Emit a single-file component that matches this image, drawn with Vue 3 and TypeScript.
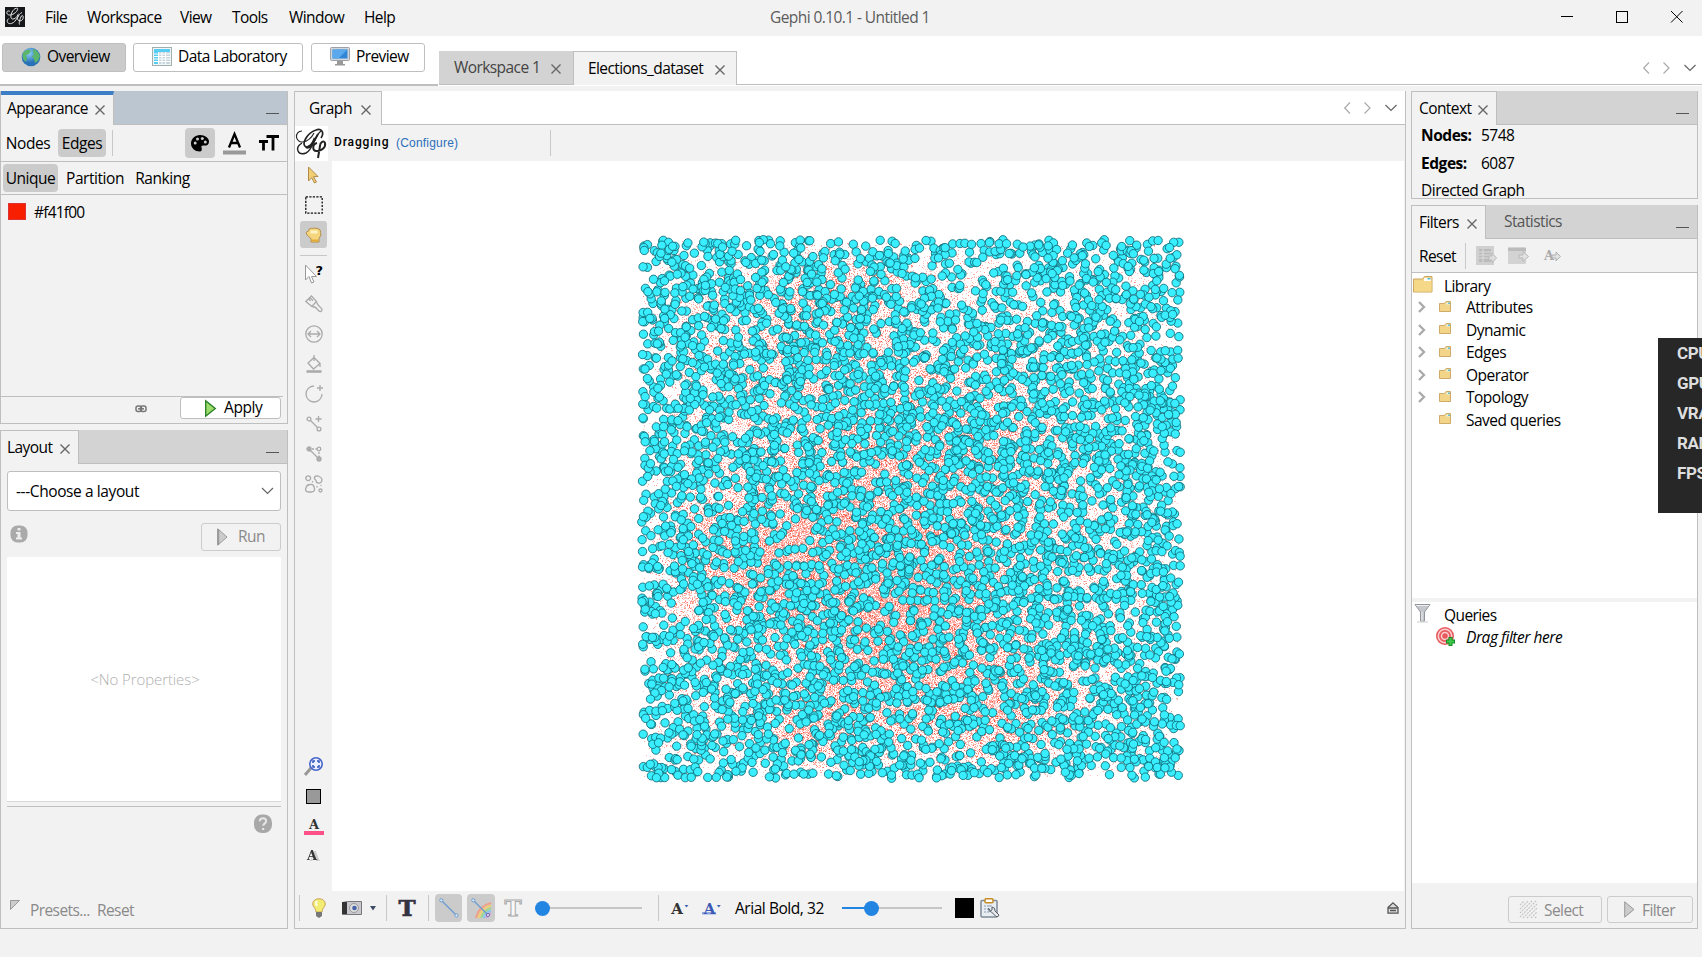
<script setup lang="ts">
import { onMounted, ref } from 'vue'

const menus = ['File', 'Workspace', 'View', 'Tools', 'Window', 'Help']
const library = ['Attributes', 'Dynamic', 'Edges', 'Operator', 'Topology', 'Saved queries']
const meters = ['CPU', 'GPU', 'VRAM', 'RAM', 'FPS']

const nodeCount = 5748
const size = 548
const canvas = ref<HTMLCanvasElement | null>(null)

let seed = 90210
function rnd(): number {
  seed = (seed + 0x6d2b79f5) | 0
  let t = Math.imul(seed ^ (seed >>> 15), 1 | seed)
  t = (t + Math.imul(t ^ (t >>> 7), 61 | t)) ^ t
  return ((t ^ (t >>> 14)) >>> 0) / 4294967296
}

interface Hub { x: number; y: number; r: number; w: number }
const hubs: Hub[] = [
  { x: 245, y: 340, r: 150, w: 0.36 },
  { x: 275, y: 400, r: 65, w: 0.35 },
  { x: 140, y: 330, r: 50, w: 0.32 },
  { x: 265, y: 240, r: 75, w: 0.22 },
  { x: 205, y: 35, r: 42, w: 0.35 },
  { x: 180, y: 510, r: 36, w: 0.35 },
  { x: 370, y: 495, r: 50, w: 0.3 },
  { x: 140, y: 100, r: 60, w: 0.22 },
  { x: 60, y: 315, r: 35, w: 0.2 },
  { x: 370, y: 200, r: 60, w: 0.15 },
]

onMounted(() => {
  const ctx = canvas.value?.getContext('2d')
  if (!ctx) return
  const img = ctx.createImageData(size, size)
  for (let y = 6; y < size - 6; y++) {
    for (let x = 6; x < size - 6; x++) {
      const border = Math.min(x, y, size - x, size - y)
      let p = 0.08
      for (const h of hubs) {
        const d = ((x - h.x) ** 2 + (y - h.y) ** 2) / (2 * h.r * h.r)
        p += h.w * Math.exp(-d)
      }
      p *= Math.min(1, border / 50)
      if (rnd() < p) {
        const i = (y * size + x) * 4
        img.data[i] = 246
        img.data[i + 1] = 45
        img.data[i + 2] = 20
        img.data[i + 3] = 60 + Math.floor(rnd() * rnd() * (90 + 230 * Math.min(p, 0.45)))
      }
    }
  }
  ctx.putImageData(img, 0, 0)
  ctx.lineWidth = 1
  ctx.strokeStyle = 'rgba(16, 105, 115, 0.85)'
  ctx.fillStyle = '#38eeff'
  for (let i = 0; i < nodeCount; i++) {
    ctx.beginPath()
    ctx.arc(4.7 + rnd() * (size - 9.4), 4.7 + rnd() * (size - 9.4), 4.2, 0, Math.PI * 2)
    ctx.fill()
    ctx.stroke()
  }
})
</script>

<template>
  <div class="app">
    <header class="title">
      <svg class="logo" width="20" height="20" viewBox="0 0 33 33"><rect width="33" height="33" fill="#15171a" /><g fill="none" stroke="#e8e8e8" stroke-width="1.6"><path d="M8 7C1 4 1 15 10 13c9-2 14-12 9-11C11 3 6 20 13 20c6 0 9-9 9-9M6 19c-5 5-1 10 5 8 8-2 10-15 17-18M24 29c-2-2 2-14 4-15 4 0 2 9-3 9s-6-6-2-9" /></g></svg>
      <nav><span v-for="m in menus" :key="m" :class="'m-' + m.toLowerCase()">{{ m }}</span></nav>
      <span class="caption">Gephi 0.10.1 - Untitled 1</span>
      <svg class="winbtns" width="122" height="20" viewBox="0 0 122 20" fill="none" stroke="#000"><path d="M0 9.5h12" /><rect x="55.5" y="4.5" width="11" height="11" /><path d="M110 4l11.500 11.500M121.500 4L110 15.500" /></svg>
    </header>

    <div class="perspective">
      <div class="modes">
        <button class="mode on"><svg width="20" height="20" viewBox="0 0 20 20"><defs><radialGradient id="gl" cx=".4" cy=".3"><stop offset="0" stop-color="#8fd0f8" /><stop offset="1" stop-color="#2a72b8" /></radialGradient></defs><circle cx="10" cy="10" r="9.300" fill="url(#gl)" /><path d="M2 6c3-4 6-4 8-2l-2 3-3 1 1 3-1 4C2 13 1 9 2 6zM12 2c4 1 6 4 7 7l-2 5-3 2-1-4-2-2 2-3-1-2z" fill="#5bb56a" /></svg><span>Overview</span></button>
        <button class="mode lab"><svg width="20" height="19" viewBox="0 0 20 19"><rect x=".5" y=".5" width="19" height="18" fill="#f4f6f6" stroke="#9fb0b0" /><rect x="2" y="2" width="16" height="15" fill="#c5d6de" /><path d="M2 2h16v3H2zM2 5h4v12H2z" fill="#55ccf4" /><path d="M2 7h16M2 9.500h16M2 12h16M2 14.500h16M6.500 5v12M10 5v12M13.500 5v12" stroke="#fff" /></svg><span>Data Laboratory</span></button>
        <button class="mode prev"><svg width="20" height="19" viewBox="0 0 20 19"><rect x=".5" y=".5" width="19" height="13" rx="1" fill="#d3d6da" stroke="#9da2a8" /><path d="M2.500 2.500h15v9h-15z" fill="#2f86d6" /><path d="M2.500 2.500h15l-9 9h-6z" fill="#59a9ec" /><path d="M7 14h6v3h2v1.500H5V17h2z" fill="#999" /></svg><span>Preview</span></button>
      </div>
      <div class="wtabs">
        <div class="wtab w1"><span>Workspace 1</span><svg class="x" width="10" height="10" viewBox="0 0 10 10"><path d="M.5.5l9 9M9.500.5l-9 9" /></svg></div>
        <div class="wtab w2"><span>Elections_dataset</span><svg class="x" width="10" height="10" viewBox="0 0 10 10"><path d="M.5.5l9 9M9.500.5l-9 9" /></svg></div>
        <svg class="nav" width="53" height="12" viewBox="0 0 53 12"><path d="M6 .5L.7 6 6 11.500M20.500.5L26 6l-5.500 5.500" stroke="#aaa" /><path d="M41.500 3L47 8.500 52.500 3" stroke="#666" /></svg>
      </div>
    </div>

    <main class="work">
      <div class="col left">
        <section class="panel appearance">
          <div class="head active"><div class="tab"><span>Appearance</span><svg class="x" width="10" height="10" viewBox="0 0 10 10"><path d="M.5.5l9 9M9.500.5l-9 9" /></svg></div><i class="min"></i></div>
          <div class="row kinds">
            <span class="seg">Nodes</span><span class="seg on">Edges</span><i class="vsep"></i>
            <div class="chooser">
              <span class="ibtn on"><svg width="18" height="17" viewBox="0 0 18 17"><path d="M9 0c5 0 9 3 9 6.500C18 10 15 11 13 10.500c-2-.4-3 .5-2.500 2 .8 2 .3 4-1.800 4C4 16.500 0 13 0 8.500S4 0 9 0z" /><g fill="#ccc"><circle cx="4.200" cy="8" r="1.500" /><circle cx="6.500" cy="4" r="1.500" /><circle cx="11.300" cy="3.600" r="1.500" /><circle cx="14.300" cy="7" r="1.500" /></g></svg></span>
              <svg width="23" height="23" viewBox="0 0 23 23"><path d="M6 15.500L11.500 2 17 15.500M7.500 11h8" fill="none" stroke="#000" stroke-width="2.300" /><path d="M0 18.500h23v4H0z" fill="#999" /></svg>
              <svg class="tt" width="20" height="16" viewBox="0 0 20 16"><path d="M7.500 1.500H20M14 1v14.500M0 6.500h9M4.500 6v9.500" stroke="#000" stroke-width="2.800" /></svg>
            </div>
          </div>
          <div class="row modesrow"><span class="seg on">Unique</span><span class="seg">Partition</span><span class="seg">Ranking</span></div>
          <div class="colour"><i></i>#f41f00</div>
          <div class="apply-row">
            <svg width="12" height="8" viewBox="0 0 12 8" fill="none" stroke="#777" stroke-width="1.500"><rect x="1" y="1" width="5.500" height="5.500" rx="2" /><rect x="5.500" y="1" width="5.500" height="5.500" rx="2" /><path d="M3 3.800h6" /></svg>
            <button class="btn"><svg width="11" height="17" viewBox="0 0 11 17"><path d="M.7.8l9.600 7.700L.7 16.200z" fill="#9bdc6c" stroke="#257c22" stroke-width="1.300" /></svg><span>Apply</span></button>
          </div>
        </section>
        <section class="panel layout">
          <div class="head"><div class="tab"><span>Layout</span><svg class="x" width="10" height="10" viewBox="0 0 10 10"><path d="M.5.5l9 9M9.500.5l-9 9" /></svg></div><i class="min"></i></div>
          <div class="combo">---Choose a layout<svg width="13" height="8" viewBox="0 0 13 8"><path d="M1 1l5.500 5.500L12 1" fill="none" stroke="#666" stroke-width="1.200" /></svg></div>
          <div class="runrow"><svg width="18" height="18" viewBox="0 0 18 18"><rect x=".5" y=".5" width="17" height="17" rx="7" fill="#aaa" /><path d="M7.500 3h3v2.500h-3zM6 7h4.500v5.500H12v2H6v-2h1.500V9H6z" fill="#eee" /></svg>
            <button class="btn off"><svg width="11" height="18" viewBox="0 0 11 18"><path d="M.7.8l9.300 8.200L.7 17.200z" fill="#ccc" stroke="#999" /><path d="M1.200 1v16" stroke="#999" stroke-width="2" /></svg><span>Run</span></button></div>
          <div class="props">&lt;No Properties&gt;</div>
          <div class="desc"><svg width="18" height="20" viewBox="0 0 18 20"><rect y=".5" width="18" height="18.500" rx="8" fill="#a8a8a8" /><path d="M5.800 7.300c0-4 6.400-4 6.400 0 0 2-3 2.200-3 4.500M8 15h2.200" fill="none" stroke="#e5e5e5" stroke-width="2" /></svg></div>
          <div class="presets"><svg width="11" height="11" viewBox="0 0 11 11"><path d="M.5.5h9l-9 9z" fill="#ccc" stroke="#999" /></svg><span>Presets...</span><span class="rs">Reset</span></div>
        </section>
      </div>

      <section class="panel graph">
        <div class="head white"><div class="tab"><span>Graph</span><svg class="x" width="10" height="10" viewBox="0 0 10 10"><path d="M.5.5l9 9M9.500.5l-9 9" /></svg></div>
          <svg class="nav" width="53" height="12" viewBox="0 0 53 12"><path d="M6 .5L.7 6 6 11.500M20.500.5L26 6l-5.500 5.500" stroke="#aaa" /><path d="M41.500 3L47 8.500 52.500 3" stroke="#666" /></svg></div>
        <div class="status">
          <svg class="script" width="33" height="35" viewBox="0 0 33 35"><rect width="33" height="35" fill="#fff" /><g fill="none" stroke="#222"><path d="M7 5C-1 5 0 17 8 16c5-1 9-5 11-9" stroke-width="1.100" /><path d="M26 12c4-6 0-10-5-8C12 7 6 18 11 21c5 1 9-7 12-13" stroke-width="1.700" /><path d="M7 17c-8 5-4 13 4 10C18 24 19 10 26 5" stroke-width="1.400" /><path d="M22 17c-5 1-5 9 0 8 5 0 9-4 8-8-1-3-5-1-5 3l-2 12" stroke-width="2" /><path d="M11 21c4 2 7-4 9-9" stroke-width="2.500" /></g></svg>
          <b>Dragging</b><a>(Configure)</a><i class="vsep"></i>
        </div>
        <div class="stage">
          <div class="tools">
            <span><svg width="14" height="18" viewBox="0 0 14 18"><path d="M1.500 1l9.500 9.500-4.500.2 3 5.300-2 1-2.800-5.300-3.200 3.300z" fill="#f2cf72" stroke="#b08a4a" /></svg></span>
            <span><svg width="18" height="18" viewBox="0 0 18 18"><rect x=".8" y=".8" width="16.400" height="16.400" fill="none" stroke="#111" stroke-width="1.300" stroke-dasharray="2.200 1.300" /></svg></span>
            <span class="hand"><svg width="17" height="16" viewBox="0 0 17 16"><path d="M4 3.500Q3.500 1.500 5.500 1.500 6 .8 7.500 1.500 9 .3 10.500 1.500 12.500.5 13 2q2.500-.3 2.500 3.500L16 8l-2 3.500V15H6v-3.500L2.500 8.500 1 5.500z" fill="#f6d67c" stroke="#ab8546" stroke-width=".9" /><path d="M5.500 5h7" stroke="#fff4c4" stroke-width="3" /><path d="M6.500 13.500H13" stroke="#e5ac35" stroke-width="2" /></svg></span>
            <hr />
            <span><svg width="20" height="20" viewBox="0 0 20 20"><path d="M1.500 1v15L5 12.500 7.500 19l2.500-1-2.500-5.500h5z" fill="#fff" stroke="#999" /><text x="11.500" y="11" class="q">?</text></svg></span>
            <span><svg class="g" viewBox="0 0 18 18"><path d="M.8 6.500L6.500 1l5 5.500q.5 3 3.500 5.500c2 1.500 2.500 3 1.500 4s-2.500.5-4-1.500q-2-3-5.500-3zM3.500 4l2 2M5 2.800l3 3M7 11.200L11 7" /></svg></span>
            <span><svg class="g" viewBox="0 0 18 18"><circle cx="9" cy="9" r="8.200" /><path d="M3 9h12M6 6L3 9l3 3M12 6l3 3-3 3" /></svg></span>
            <span><svg class="g" viewBox="0 0 18 18"><path d="M9 2.500l6 6-6.500 5.500-5.500-6zM9 0v6M15 8v4" /><path d="M1.500 16.500h15" stroke-width="2.600" /></svg></span>
            <span><svg class="g" viewBox="0 0 18 18"><path d="M9 1a8 8 0 1 0 8 8M15 0v6M12 3h6" /></svg></span>
            <span><svg class="g" viewBox="0 0 18 18"><circle cx="4" cy="4" r="1.900" /><circle cx="14" cy="14" r="1.900" /><path d="M5.500 5.500l7 7M13.500 1v6M10.500 4h6" /></svg></span>
            <span><svg class="g" viewBox="0 0 18 18"><circle cx="4" cy="4" r="2" fill="#b0b0b0" /><circle cx="14" cy="14" r="2" fill="#b0b0b0" /><circle cx="14" cy="4" r="1.800" /><path d="M4 4l10 10" /><path d="M7 4h5M14 7v5" stroke-dasharray="2 1.500" /></svg></span>
            <span><svg class="g" viewBox="0 0 18 18"><circle cx="3.200" cy="3.200" r="2.400" /><path d="M10 1.500q1-1 3-.5 4 1.500 4 4-.5 3.500-4 3-2-.5-2-2.500-2.500-2-1-4zM5 9.500q3.500-.5 4 2.500 2 4.500-2.500 5H3Q-.5 16 1 12.500 2 9.500 5 9.500z" /><circle cx="15.500" cy="15.500" r="1.500" /><path d="M7.500 6v1.500M12 11v1.500M16 10v1" /></svg></span>
            <div class="fill"></div>
            <span><svg width="19" height="19" viewBox="0 0 19 19"><path d="M1 18l6-7" stroke="#999" stroke-width="3" /><circle cx="12" cy="7" r="6.200" fill="#eaf0ff" stroke="#4a67c8" stroke-width="1.600" /><path d="M9 6V4h2M13 4h2v2M15 8v2h-2M11 10H9V8" fill="none" stroke="#3453b8" stroke-width="1.500" /></svg></span>
            <span><i class="swatch"></i></span>
            <span><svg width="20" height="18" viewBox="0 0 20 18"><text x="10" y="12" class="slab">A</text><path d="M0 14h20v4H0z" fill="#ff5187" /></svg></span>
            <span><svg width="16" height="16" viewBox="0 0 16 16"><text x="6" y="12" class="slab shade">A</text></svg></span>
          </div>
          <div class="view"><canvas ref="canvas" :width="size" :height="size"></canvas></div>
        </div>
        <div class="bottom">
          <i class="vsep"></i>
          <svg class="bulb" width="14" height="20" viewBox="0 0 14 20"><path d="M4 14C4 10 .7 9 .7 6c0-7 12.600-7 12.600 0 0 3-3.300 4-3.300 8z" fill="#f3ec72" stroke="#c9a45c" /><path d="M5 3q-2 2 0 5" fill="none" stroke="#fffde0" stroke-width="2" /><path d="M4 14h6v4l-3 2-3-2z" fill="#777" /></svg>
          <svg class="cam" width="20" height="16" viewBox="0 0 20 16"><path d="M.5 2.500l5-1h14v13H.5z" fill="#c8c8ce" stroke="#777" /><path d="M0 2h5v12H0z" fill="#333" /><circle cx="12" cy="8" r="4.500" fill="#ddd" stroke="#999" /><circle cx="12.500" cy="8" r="2.300" fill="#4762a8" /></svg>
          <svg class="dd" width="6" height="5" viewBox="0 0 6 5"><path d="M0 0h6L3 4.500z" fill="#3d4b66" /></svg>
          <i class="vsep"></i>
          <svg class="t1" width="20" height="26" viewBox="0 0 20 26"><text x="10" y="21" class="bigt">T</text></svg>
          <i class="vsep"></i>
          <span class="ibtn on b1"><svg width="20" height="20" viewBox="0 0 20 20"><path d="M2 2l16 16" stroke="#6f9dd0" stroke-width="1.500" /><circle cx="2.300" cy="2.300" r="1.600" fill="#dcebfa" stroke="#6f9dd0" /><circle cx="17.500" cy="17.500" r="1.600" fill="#dcebfa" stroke="#6f9dd0" /></svg></span>
          <span class="ibtn on b2"><svg width="20" height="20" viewBox="0 0 20 20" fill="none"><g stroke-width="2.200"><path d="M5 20Q8 8 20 5" stroke="#efa08d" /><path d="M7.500 20Q10 10 20 7.500" stroke="#f1ce74" /><path d="M10 20q2-7 10-10" stroke="#a5d68d" /><path d="M12.500 20q1-5 7.500-7.500" stroke="#8bc7e8" /><path d="M15 20q1-3 5-5" stroke="#c6a4dd" /></g><path d="M2 2l16 16" stroke="#6f9dd0" stroke-width="1.500" /><circle cx="2.300" cy="2.300" r="1.600" fill="#dcebfa" stroke="#6f9dd0" /><circle cx="17" cy="17" r="1.600" fill="#ddd" stroke="#8065b8" /></svg></span>
          <svg class="t2" width="20" height="26" viewBox="0 0 20 26"><text x="10" y="21" class="bigt hollow">T</text></svg>
          <div class="slider s1"><i></i></div>
          <i class="vsep"></i>
          <svg class="a1" width="18" height="16" viewBox="0 0 18 16"><text x="6" y="14" class="slab mid">A</text><path d="M13.500 5h4l-2 2.500z" fill="#3f64b5" /></svg>
          <svg class="a2" width="19" height="16" viewBox="0 0 19 16"><path d="M0 12h14v2.500H0z" fill="#92a9e0" /><text x="7.500" y="14" class="slab mid blue">A</text><path d="M14.800 5h4l-2 2.500z" fill="#3f64b5" /></svg>
          <span class="font">Arial Bold, 32</span>
          <div class="slider s2"><b></b><i></i></div>
          <i class="black"></i>
          <svg class="clip" width="20" height="20" viewBox="0 0 20 20"><rect x="1" y="2.500" width="16" height="16.500" rx="1" fill="#e8edf2" stroke="#7f8b98" stroke-width="1.500" /><rect x="5" y=".8" width="8" height="4" rx="1" fill="#fff" stroke="#c68b22" stroke-width="1.500" /><path d="M4 8h2M7 8h5M4 11h2M7 11h3M4 14h2M7 14h2" stroke="#8899b5" /><path d="M8.500 10.500q0 3.500 3 3.500l4.500 4.500q2.500 1 3-1.500L15 13q.5-3.500-3-4v3l-1.500.5z" fill="#e8e8ea" stroke="#555d68" /></svg>
          <svg class="up" width="12" height="12" viewBox="0 0 12 12"><path d="M1 5.500L6 .8l5 4.700v5.700H1z" fill="#ddd" stroke="#555" stroke-width="1.300" /><path d="M1 6h10M3 8.500h6" stroke="#555" stroke-width="1.300" /></svg>
        </div>
      </section>

      <div class="col right">
        <section class="panel context">
          <div class="head"><div class="tab"><span>Context</span><svg class="x" width="10" height="10" viewBox="0 0 10 10"><path d="M.5.5l9 9M9.500.5l-9 9" /></svg></div><i class="min"></i></div>
          <div class="stats"><p><b>Nodes:</b>5748</p><p><b>Edges:</b>6087</p><p>Directed Graph</p></div>
        </section>
        <section class="panel filters">
          <div class="head"><div class="tab"><span>Filters</span><svg class="x" width="10" height="10" viewBox="0 0 10 10"><path d="M.5.5l9 9M9.500.5l-9 9" /></svg></div><span class="tab2">Statistics</span><i class="min"></i></div>
          <div class="ftool"><span>Reset</span><i class="vsep"></i>
            <svg class="f1" width="21" height="20" viewBox="0 0 21 20"><rect width="18" height="19" fill="#d0d0d0" /><path d="M3 3h12v13H3z" fill="#bbb" /><path d="M3 6h12M3 9h12M3 12h12M7 3v13" stroke="#ddd" /><path d="M13 10h3V7l4.500 5-4.500 5v-3h-3z" fill="#ddd" stroke="#bbb" /></svg>
            <svg class="f2" width="21" height="18" viewBox="0 0 21 18"><rect width="18" height="17" rx="1" fill="#d3d3d3" /><path d="M0 1h18v3H0z" fill="#bbb" /><path d="M11 8h4V4.500l5.500 5L15 14.500V11h-4z" fill="#e2e2e2" stroke="#b8b8b8" /></svg>
            <svg class="f3" width="18" height="14" viewBox="0 0 18 14"><text x="5" y="11" class="slab grey">A</text><path d="M8 6h4V3l4.500 4.500L12 12V9H8z" fill="#e2e2e2" stroke="#b0b0b0" /></svg>
          </div>
          <div class="tree">
            <div class="root"><svg width="20" height="17" viewBox="0 0 20 17"><path d="M.5 3h9l2-2.500h7.500v15.500H.5z" fill="#f2d589" stroke="#cca65e" /><path d="M11 2h7v3h-7z" fill="#fff" /><path d="M14.500 2h3v1.500h-3z" fill="#56b8d8" /><path d="M1 5h17.500v10.500H1z" fill="#f5d988" /></svg>Library</div>
            <div v-for="(n, i) in library" :key="n" class="leaf">
              <svg class="chev" width="8" height="12" viewBox="0 0 8 12"><path v-if="i < 5" d="M1 1l5 5-5 5" fill="none" stroke="#aaa" stroke-width="2.300" /></svg>
              <svg class="fold" width="12" height="11" viewBox="0 0 12 11"><path d="M.5 2.500h5L7 .5h4.500v10H.5z" fill="#f2d589" stroke="#d0aa68" /><path d="M7.500 1.500H11v2H7.500z" fill="#e3f4ec" /><path d="M9 1.500h2V3H9z" fill="#63bdcd" /></svg>
              {{ n }}
            </div>
          </div>
          <div class="queries">
            <div class="root"><svg width="17" height="20" viewBox="0 0 17 20"><path d="M1 1.500h15L10.500 9v9h-4V9z" fill="#c5c7cd" stroke="#92959c" /><path d="M2 2.500h13" stroke="#eee" /><path d="M8 9v9" stroke="#eee" /><path d="M3 19h11" stroke="#ccc" /></svg>Queries</div>
            <div class="drag"><svg width="20" height="20" viewBox="0 0 20 20"><circle cx="9" cy="9" r="9" fill="#e8595d" /><circle cx="9" cy="9" r="6.700" fill="none" stroke="#fbd0d0" stroke-width="1.500" /><circle cx="9" cy="9" r="3.500" fill="none" stroke="#fbd0d0" stroke-width="1.500" /><path d="M14.500 10v9M10 14.500h9" stroke="#178a25" stroke-width="4" /><path d="M14.500 11v7M11 14.500h7" stroke="#3dc94a" stroke-width="2.200" /></svg>Drag filter here</div>
          </div>
          <div class="fbtns">
            <button class="btn off sel"><svg width="17" height="17" viewBox="0 0 17 17"><path d="M0 4l4-4M0 8l8-8M0 12L12 0M0 16L16 0M3 17L17 3M7 17L17 7M11 17l6-6M15 17l2-2" stroke="#c5c5c5" stroke-width="1.200" stroke-dasharray="2 1" /></svg><span>Select</span></button>
            <button class="btn off fil"><svg width="11" height="17" viewBox="0 0 11 17"><path d="M.7.8l9.300 7.700L.7 16.200z" fill="#ccc" stroke="#999" /></svg><span>Filter</span></button>
          </div>
        </section>
      </div>
    </main>
    <aside class="overlay"><span v-for="m in meters" :key="m">{{ m }}</span></aside>
  </div>
</template>

<style>
html, body { margin: 0; overflow: hidden; background: #f2f2f2; }
</style>

<style scoped>
* { box-sizing: border-box; }
.app { position: relative; width: 1702px; height: 957px; overflow: hidden; background: #f2f2f2; color: #000; font: 15.500px/20px "Open Sans", "Noto Sans", sans-serif; letter-spacing: -0.58px; display: flex; flex-direction: column; white-space: nowrap; }
svg { display: block; flex: none; overflow: visible; }
button { font: inherit; letter-spacing: inherit; color: inherit; margin: 0; padding: 0; display: flex; align-items: center; border: 1px solid #bfbfbf; border-radius: 3px; background: #fff; }
button span, .wtab span, .tab span { margin-top: -2px; }
.title { height: 36px; display: flex; align-items: center; flex: none; padding-left: 5px; }
.logo { margin-top: -2px; }
nav { display: flex; width: 745px; padding-left: 20px; margin-top: -3px; }
.m-file { width: 42px; }
.m-workspace { width: 93px; }
.m-view { width: 52px; }
.m-tools { width: 57px; }
.m-window { width: 75px; }
.caption { color: #5c5c5c; margin-top: -3px; }
.winbtns { margin-left: auto; margin-right: 19px; margin-top: -2px; }
.perspective { height: 50px; background: #fff; display: flex; flex: none; }
.modes { width: 438px; display: flex; gap: 7px; padding: 7px 0 0 2px; border-bottom: 2px solid #bfbfbf; }
.mode { height: 29px; gap: 6px; padding: 0 0 2px 18px; }
.mode.on { width: 124px; background: #cbcbcb; }
.mode.lab { width: 170px; }
.mode.prev { width: 114px; margin-left: 1px; }
.mode span { margin-top: -1px; }
.wtabs { flex: 1; margin: 15px 0 1px 1px; display: flex; border-bottom: 1px solid #bfbfbf; }
.wtab { height: 33px; display: flex; align-items: center; padding-left: 15px; }
.wtab span { width: 97px; }
.w1 { width: 134px; background: #d3d3d3; color: #444; }
.w2 { width: 164px; height: 34px; background: #f2f2f2; border: 1px solid #bfbfbf; border-bottom: 0; padding-left: 14px; }
.w2 span { width: 127px; }
.x { margin-top: 3px; fill: none; stroke: #666; stroke-width: 1.400; }
.nav { fill: none; margin: 11px 6px 0 auto; stroke-width: 1.200; }
.work { display: flex; gap: 6px; padding: 5px 4px 28px 0; flex: 1; min-height: 0; }
.col { display: flex; flex-direction: column; gap: 6px; }
.left { width: 288px; }
.right { width: 287px; margin-left: -1px; }
.panel { border: 1px solid #bfbfbf; border-top: 0; display: flex; flex-direction: column; overflow: hidden; min-height: 0; }
.head { height: 34px; flex: none; display: flex; background: #d3d3d3; margin: 0 -1px; border-bottom: 1px solid #bfbfbf; }
.head.active { background: #bcc6d0; }
.head.white { background: #fff; }
.tab { height: 34px; display: flex; align-items: center; justify-content: space-between; background: #f2f2f2; border: 1px solid #bfbfbf; border-bottom: 0; padding: 0 8px 0 6px; }
.active .tab { border-top: 4px solid #3d7fc6; width: 114px; padding-bottom: 3px; }
.layout .tab { width: 79px; }
.min { width: 13px; height: 1px; background: #555; margin: 22px 9px 0 auto; }
.appearance { height: 333px; }
.row { display: flex; align-items: center; border-bottom: 1px solid #bfbfbf; flex: none; }
.kinds { height: 37px; }
.seg { height: 28px; display: flex; align-items: center; justify-content: center; border-radius: 4px; letter-spacing: -.45px; }
.seg.on, .ibtn.on { background: #cbcbcb; }
.kinds .seg { width: 48px; margin-right: 9px; padding-left: 6px; }
.kinds .seg.on { padding: 0; margin-right: 6px; }
.vsep { width: 1px; height: 26px; background: #c8c8c8; flex: none; }
.chooser { display: flex; align-items: center; margin-left: 72px; gap: 8px; }
.ibtn { width: 30px; height: 30px; border-radius: 4px; display: flex; align-items: center; justify-content: center; }
.tt { margin-left: 5px; }
.modesrow { height: 33px; padding-left: 2px; }
.modesrow .seg { width: 55px; padding-bottom: 1px; }
.modesrow .seg + .seg { width: 56px; margin-left: 9px; }
.modesrow .seg:last-child { width: 53px; margin-left: 13px; }
.colour { display: flex; align-items: center; padding: 7px 0 0 7px; gap: 8px; letter-spacing: -.8px; }
.colour i { width: 18px; height: 17px; background: #f81e00; border: 1px solid #d33; margin-top: -1px; }
.apply-row { margin: auto 4px 0 0; height: 27px; border-top: 1px solid #bfbfbf; display: flex; align-items: flex-start; }
.apply-row > svg { margin: 8px 33px 0 134px; }
.apply-row .btn { width: 101px; height: 22px; padding-left: 24px; gap: 8px; letter-spacing: -.4px; }
.layout { flex: 1; }
.combo { height: 40px; margin: 7px 6px 0; border: 1px solid #bfbfbf; border-radius: 3px; background: #fff; display: flex; align-items: center; justify-content: space-between; padding: 0 6px 0 8px; flex: none; letter-spacing: -.4px; }
.runrow { height: 29px; margin: 12px 6px 0 9px; display: flex; justify-content: space-between; flex: none; }
.runrow > svg { margin-top: 2px; }
.runrow .btn { width: 80px; height: 28px; padding-left: 15px; gap: 10px; }
.off { color: #8a8a8a; background: #f2f2f2; border-color: #ccc; }
.props { height: 245px; margin: 5px 6px 0; background: #fff; border-bottom: 1px solid #d8d8d8; color: #b0b0b0; display: flex; align-items: center; justify-content: center; font-weight: 300; font-size: 15px; letter-spacing: -.1px; flex: none; padding-left: 2px; }
.desc { margin: 4px 6px 0; border-top: 1px solid #bfbfbf; height: 90px; display: flex; justify-content: flex-end; padding: 7px 9px; flex: none; }
.presets { margin-top: auto; height: 28px; display: flex; padding-left: 9px; color: #8a8a8a; }
.presets span { width: 57px; margin-left: 9px; }
.presets .rs { margin-left: 10px; }
.graph { width: 1112px; }
.graph .tab { width: 88px; padding: 0 10px 0 14px; letter-spacing: -.45px; }
.graph .nav { margin: 11px 9px 0 auto; }
.status { height: 36px; display: flex; align-items: center; flex: none; }
.script { margin-top: 1px; }
.status b { font: 500 12px Roboto, sans-serif; letter-spacing: .85px; margin-left: 6px; width: 62px; margin-top: -2px; flex: none; }
.status a { font: 12px "Liberation Sans", sans-serif; color: #2c6fba; letter-spacing: .2px; }
.status .vsep { margin-left: auto; margin-right: 854px; }
.stage { flex: 1; display: flex; min-height: 0; }
.tools { width: 37px; display: flex; flex-direction: column; align-items: center; padding: 0 0 20px 0; margin-top: -1px; }
.tools > span { width: 27px; height: 30px; flex: none; display: flex; align-items: center; justify-content: center; }
.tools .hand { background: #cbcbcb; height: 27px; border-radius: 3px; margin: 1px 0 2px; }
hr { width: 27px; height: 1px; flex: none; border: 0; background: #c8c8c8; margin: 5px 0 3px; }
.g { width: 18px; height: 18px; fill: none; stroke: #aaa; stroke-width: 1.300; }
.q { font: 700 13px/1 "DejaVu Sans", sans-serif; letter-spacing: 0; }
.fill { flex: 1; }
.swatch { width: 15px; height: 15px; background: #999; border: 1px solid #000; }
.slab { font: 700 13px/1 "DejaVu Serif", serif; text-anchor: middle; fill: #333; letter-spacing: 0; }
.mid { font-size: 15px; }
.shade { filter: drop-shadow(3px 1px 0 #ccc); }
.blue { fill: #3b58b5; }
.grey { fill: #aaa; }
.bigt { font: 700 23px/1 "DejaVu Serif", serif; text-anchor: middle; fill: #333440; stroke: #333440; letter-spacing: 0; stroke-width: .7; }
.hollow { fill: #f8f8f8; stroke: #aaa; stroke-width: 1; }
.view { flex: 1; background: #fff; padding: 74px 0 0 305px; margin-right: 1px; overflow: hidden; }
canvas { display: block; }
.bottom { height: 37px; flex: none; display: flex; align-items: center; padding: 0 12px 3px 4px; }
.bulb { margin-left: 12px; }
.cam { margin-left: 16px; }
.dd { margin-left: 8px; margin-right: 10px; }
.t1 { margin: 0 11px 0 10px; }
.b1, .b2 { width: 27px; height: 28px; margin-left: 6px; }
.b2 { width: 28px; margin-left: 5px; }
.t2 { margin-left: 8px; }
.slider { position: relative; width: 100px; height: 15px; margin-left: 19px; background: linear-gradient(#c6c6c6, #c6c6c6) center / 100% 2px no-repeat; }
.slider i { position: absolute; left: -7px; top: 0; width: 15px; height: 15px; border-radius: 50%; background: #2385e2; }
.slider b { position: absolute; left: 0; top: 6px; width: 30px; height: 2px; background: #2385e2; }
.s1 { margin-right: 16px; }
.s2 i { left: 22px; }
.a1 { margin-left: 12px; }
.a2 { margin-left: 13px; }
.font { width: 89px; margin-left: 14px; letter-spacing: -.45px; }
.s2 { margin-left: 18px; }
.black { width: 19px; height: 20px; background: #000; margin-left: 13px; }
.clip { margin-left: 6px; }
.up { margin-left: auto; margin-right: -6px; }
.context { height: 108px; }
.context .tab { width: 86px; padding-left: 7px; }
.stats { padding: 0 0 0 9px; }
.stats p { margin: 0 0 7.500px; letter-spacing: -.5px; }
.stats b { display: inline-block; width: 60px; letter-spacing: -.45px; }
.filters { flex: 1; }
.filters .tab { width: 75px; padding-left: 7px; }
.tab2 { padding: 6px 0 0 18px; color: #555; }
.ftool { height: 34px; border-bottom: 1px solid #bfbfbf; display: flex; align-items: center; padding-left: 7px; flex: none; }
.ftool span { width: 46px; }
.f1 { margin-left: 10px; }
.f2 { margin-left: 11px; }
.f3 { margin-left: 15px; }
.tree { height: 325px; background: #fff; padding-top: 1px; flex: none; }
.root { height: 23px; display: flex; align-items: center; padding-left: 1px; gap: 11px; }
.root svg { margin-top: -3px; }
.leaf { height: 22.500px; display: flex; align-items: center; padding-left: 6px; position: relative; top: -1px; letter-spacing: -.5px; }
.chev { margin-right: 13px; }
.fold { margin: -2px 15px 0 0; }
.queries { flex: 1; margin-top: 4px; background: #fff; padding-top: 1px; }
.queries .root { padding-left: 2px; gap: 13px; }
.drag { height: 22px; display: flex; align-items: center; font-style: italic; padding-left: 24px; gap: 10px; letter-spacing: -.45px; }
.drag svg { margin-top: -1px; }
.fbtns { height: 45px; flex: none; display: flex; gap: 5px; justify-content: flex-end; padding: 13px 4px 0 0; }
.fbtns .btn { height: 27px; }
.fbtns .btn span { margin-top: 0; }
.sel { width: 94px; padding-left: 11px; gap: 7px; }
.fil { width: 86px; padding-left: 16px; gap: 7px; }
.overlay { position: absolute; left: 1658px; top: 338px; width: 44px; height: 175px; overflow: hidden; background: #272727; color: #dedede; padding-left: 19px; font: 700 17px/30px Roboto, sans-serif; letter-spacing: -.4px; display: flex; flex-direction: column; }
</style>
